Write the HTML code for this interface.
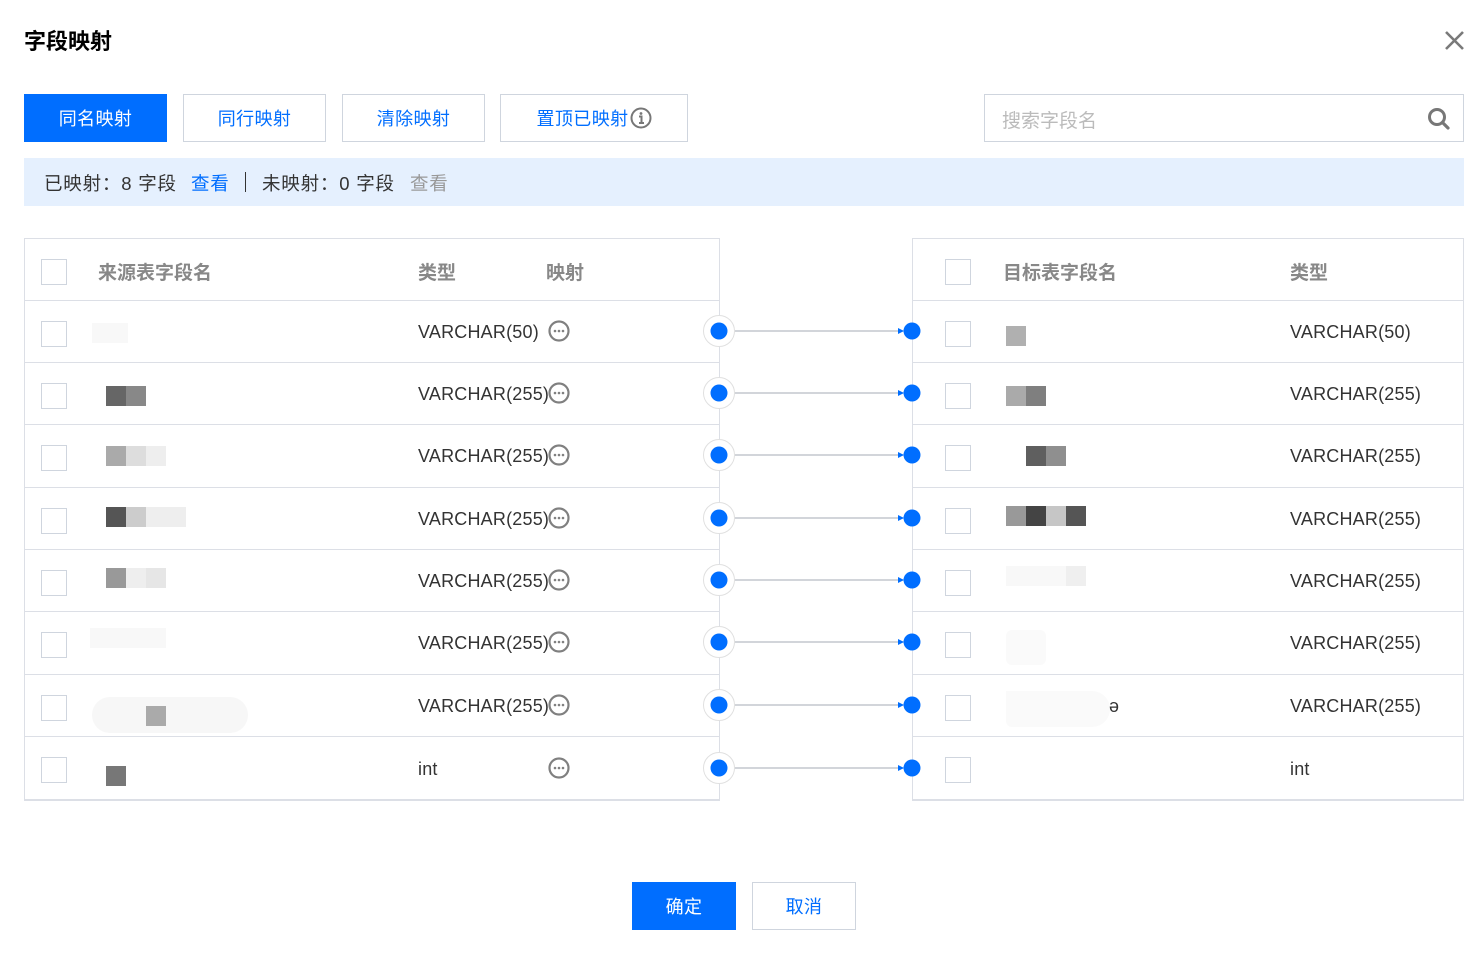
<!DOCTYPE html>
<html><head><meta charset="utf-8"><style>
*{margin:0;padding:0;box-sizing:border-box}
body{width:1468px;height:968px;background:#fff;position:relative;overflow:hidden;font-family:"Liberation Sans","Noto Sans CJK SC",sans-serif;color:#333}
.a{position:absolute}
.btn{position:absolute;top:94px;height:48px;border:1px solid #cfd5de;color:#006eff;font-size:18px;letter-spacing:0.4px;display:flex;align-items:center;justify-content:center;background:#fff}
.cb{position:absolute;width:26px;height:26px;border:1px solid #cfd5de;background:#fff}
.hd{position:absolute;font-size:19px;font-weight:bold;color:#888}
.t{position:absolute;font-size:18px;color:#333;line-height:20px;letter-spacing:0.2px}
.hl{position:absolute;height:1px;background:#dcdfe6}
.sq{position:absolute;width:20px;height:20px}
</style></head><body>
<div class="a" style="left:24px;top:24px;font-size:22px;font-weight:bold;color:#000">字段映射</div>
<svg class="a" style="left:1444px;top:30px" width="21" height="21" viewBox="0 0 21 21"><path d="M2 2L19 19M19 2L2 19" stroke="#7a7a7a" stroke-width="2.6"/></svg>

<div class="btn" style="left:24px;width:143px;background:#006eff;border-color:#006eff;color:#fff">同名映射</div>
<div class="btn" style="left:183px;width:143px">同行映射</div>
<div class="btn" style="left:342px;width:143px">清除映射</div>
<div class="btn" style="left:500px;width:188px">置顶已映射<svg width="22" height="22" viewBox="0 0 22 22" style="margin-left:1px"><circle cx="11" cy="11" r="9.5" fill="none" stroke="#777" stroke-width="2"/><circle cx="11" cy="6.5" r="1.4" fill="#777"/><path d="M9 9.5h2.5v6.5M9 16h5" stroke="#777" stroke-width="2" fill="none"/></svg></div>
<div class="a" style="left:984px;top:94px;width:480px;height:48px;border:1px solid #cfd5de"></div>
<div class="a" style="left:1002px;top:106px;font-size:19px;color:#bbb">搜索字段名</div>
<svg class="a" style="left:1427px;top:107px" width="24" height="24" viewBox="0 0 24 24"><circle cx="10" cy="10" r="7.5" fill="none" stroke="#777" stroke-width="3"/><path d="M15.5 15.5L21 21" stroke="#777" stroke-width="3.2" stroke-linecap="round"/></svg>

<div class="a" style="left:24px;top:158px;width:1440px;height:48px;background:#e5f0fe"></div>
<div class="a" style="left:44px;top:170px;font-size:18.5px;letter-spacing:0.8px;color:#333;white-space:nowrap">已映射：8 字段</div>
<div class="a" style="left:191px;top:170px;font-size:18.5px;letter-spacing:0.8px;color:#006eff">查看</div>
<div class="a" style="left:245px;top:172px;width:1px;height:20px;background:#333"></div>
<div class="a" style="left:262px;top:170px;font-size:18.5px;letter-spacing:0.8px;color:#333;white-space:nowrap">未映射：0 字段</div>
<div class="a" style="left:410px;top:170px;font-size:18.5px;letter-spacing:0.8px;color:#999">查看</div>

<!-- tables -->
<div class="a" style="left:24px;top:238px;width:696px;height:563px;border:1px solid #dcdfe6;border-bottom:2px solid #dcdfe6"></div>
<div class="a" style="left:912px;top:238px;width:552px;height:563px;border:1px solid #dcdfe6;border-bottom:2px solid #dcdfe6"></div>
<div class="a" style="left:719px;top:238px;width:193px;height:565px;background:#fff"></div>
<div class="a" style="left:719px;top:238px;width:1px;height:563px;background:#dcdfe6"></div>

<div class="cb" style="left:41px;top:259px"></div>
<div class="hd" style="left:98px;top:258px">来源表字段名</div>
<div class="hd" style="left:418px;top:258px">类型</div>
<div class="hd" style="left:546px;top:258px">映射</div>
<div class="cb" style="left:945px;top:259px"></div>
<div class="hd" style="left:1003px;top:258px">目标表字段名</div>
<div class="hd" style="left:1290px;top:258px">类型</div>

<div class="hl" style="left:24px;top:300px;width:695px"></div><div class="hl" style="left:912px;top:300px;width:552px"></div>
<div class="hl" style="left:24px;top:362px;width:695px"></div><div class="hl" style="left:912px;top:362px;width:552px"></div>
<div class="hl" style="left:24px;top:424px;width:695px"></div><div class="hl" style="left:912px;top:424px;width:552px"></div>
<div class="hl" style="left:24px;top:487px;width:695px"></div><div class="hl" style="left:912px;top:487px;width:552px"></div>
<div class="hl" style="left:24px;top:549px;width:695px"></div><div class="hl" style="left:912px;top:549px;width:552px"></div>
<div class="hl" style="left:24px;top:611px;width:695px"></div><div class="hl" style="left:912px;top:611px;width:552px"></div>
<div class="hl" style="left:24px;top:674px;width:695px"></div><div class="hl" style="left:912px;top:674px;width:552px"></div>
<div class="hl" style="left:24px;top:736px;width:695px"></div><div class="hl" style="left:912px;top:736px;width:552px"></div>

<!-- checkboxes -->
<div class="cb" style="left:41px;top:321px"></div><div class="cb" style="left:945px;top:321px"></div>
<div class="cb" style="left:41px;top:383px"></div><div class="cb" style="left:945px;top:383px"></div>
<div class="cb" style="left:41px;top:445px"></div><div class="cb" style="left:945px;top:445px"></div>
<div class="cb" style="left:41px;top:508px"></div><div class="cb" style="left:945px;top:508px"></div>
<div class="cb" style="left:41px;top:570px"></div><div class="cb" style="left:945px;top:570px"></div>
<div class="cb" style="left:41px;top:632px"></div><div class="cb" style="left:945px;top:632px"></div>
<div class="cb" style="left:41px;top:695px"></div><div class="cb" style="left:945px;top:695px"></div>
<div class="cb" style="left:41px;top:757px"></div><div class="cb" style="left:945px;top:757px"></div>

<!-- types left -->
<div class="t" style="left:418px;top:322px">VARCHAR(50)</div>
<div class="t" style="left:418px;top:384px">VARCHAR(255)</div>
<div class="t" style="left:418px;top:446px">VARCHAR(255)</div>
<div class="t" style="left:418px;top:509px">VARCHAR(255)</div>
<div class="t" style="left:418px;top:571px">VARCHAR(255)</div>
<div class="t" style="left:418px;top:633px">VARCHAR(255)</div>
<div class="t" style="left:418px;top:696px">VARCHAR(255)</div>
<div class="t" style="left:418px;top:759px">int</div>
<!-- types right -->
<div class="t" style="left:1290px;top:322px">VARCHAR(50)</div>
<div class="t" style="left:1290px;top:384px">VARCHAR(255)</div>
<div class="t" style="left:1290px;top:446px">VARCHAR(255)</div>
<div class="t" style="left:1290px;top:509px">VARCHAR(255)</div>
<div class="t" style="left:1290px;top:571px">VARCHAR(255)</div>
<div class="t" style="left:1290px;top:633px">VARCHAR(255)</div>
<div class="t" style="left:1290px;top:696px">VARCHAR(255)</div>
<div class="t" style="left:1290px;top:759px">int</div>

<svg class="a" style="left:0;top:0" width="1468" height="968">
<defs>
<g id="e"><circle r="9.5" fill="#fff" stroke="#808080" stroke-width="2.2"/><circle cx="-4" r="1.3" fill="#808080"/><circle r="1.3" fill="#808080"/><circle cx="4" r="1.3" fill="#808080"/></g>
<g id="c"><circle cx="719" r="15.5" fill="#fff" stroke="#e0e0e0"/><circle cx="719" r="8.5" fill="#006eff"/><path d="M735 0H903" stroke="#b8bcc4" stroke-width="1.3"/><path d="M898 -3L904 0L898 3Z" fill="#006eff"/><circle cx="912" r="8.5" fill="#006eff"/></g>
</defs>
<use href="#e" x="559" y="331"/><use href="#e" x="559" y="393"/><use href="#e" x="559" y="455"/><use href="#e" x="559" y="518"/><use href="#e" x="559" y="580"/><use href="#e" x="559" y="642"/><use href="#e" x="559" y="705"/><use href="#e" x="559" y="768"/>
<use href="#c" y="331"/><use href="#c" y="393"/><use href="#c" y="455"/><use href="#c" y="518"/><use href="#c" y="580"/><use href="#c" y="642"/><use href="#c" y="705"/><use href="#c" y="768"/>
</svg>

<!-- blurred name blocks left -->
<div class="sq" style="left:92px;top:323px;width:36px;background:#f8f8f8"></div>
<div class="sq" style="left:106px;top:386px;background:#666"></div><div class="sq" style="left:126px;top:386px;background:#888"></div>
<div class="sq" style="left:106px;top:446px;background:#aaa"></div><div class="sq" style="left:126px;top:446px;background:#ddd"></div><div class="sq" style="left:146px;top:446px;background:#eee"></div>
<div class="sq" style="left:106px;top:507px;background:#555"></div><div class="sq" style="left:126px;top:507px;background:#ccc"></div><div class="sq" style="left:146px;top:507px;background:#eee"></div><div class="sq" style="left:166px;top:507px;background:#eee"></div>
<div class="sq" style="left:106px;top:568px;background:#999"></div><div class="sq" style="left:126px;top:568px;background:#eee"></div><div class="sq" style="left:146px;top:568px;background:#e6e6e6"></div>
<div class="sq" style="left:90px;top:628px;width:76px;background:#f8f8f8"></div>
<div class="a" style="left:92px;top:697px;width:156px;height:36px;background:#f7f7f7;border-radius:18px"></div>
<div class="sq" style="left:146px;top:706px;background:#aaa"></div>
<div class="sq" style="left:106px;top:766px;background:#777"></div>
<!-- right blocks -->
<div class="sq" style="left:1006px;top:326px;background:#b0b0b0"></div>
<div class="sq" style="left:1006px;top:386px;background:#aaa"></div><div class="sq" style="left:1026px;top:386px;background:#7f7f7f"></div>
<div class="sq" style="left:1026px;top:446px;background:#5f5f5f"></div><div class="sq" style="left:1046px;top:446px;background:#8f8f8f"></div>
<div class="sq" style="left:1006px;top:506px;background:#999"></div><div class="sq" style="left:1026px;top:506px;background:#444"></div><div class="sq" style="left:1046px;top:506px;background:#c6c6c6"></div><div class="sq" style="left:1066px;top:506px;background:#555"></div>
<div class="sq" style="left:1006px;top:566px;width:80px;background:#f8f8f8"></div><div class="sq" style="left:1066px;top:566px;background:#efefef"></div>
<div class="a" style="left:1006px;top:630px;width:40px;height:35px;background:#fafafa;border-radius:6px"></div>
<div class="a" style="left:1006px;top:691px;width:104px;height:36px;background:#fafafa;border-radius:0 18px 18px 6px"></div>
<div class="t" style="left:1109px;top:696px">ə</div>

<!-- footer -->
<div class="btn" style="left:632px;top:882px;width:104px;background:#006eff;border-color:#006eff;color:#fff">确定</div>
<div class="btn" style="left:752px;top:882px;width:104px">取消</div>
</body></html>
